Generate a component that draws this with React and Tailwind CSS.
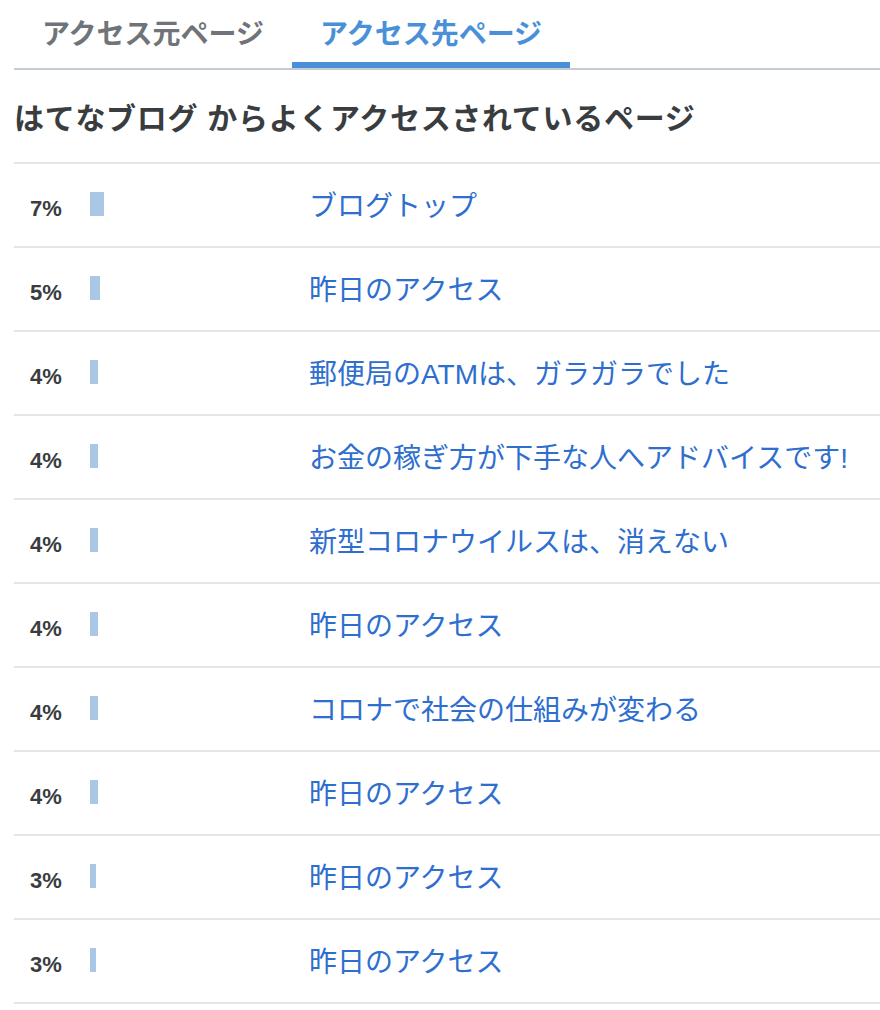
import React, { useState } from 'react';

const rows = [
  { pct: 7, title: 'ブログトップ' },
  { pct: 5, title: '昨日のアクセス' },
  { pct: 4, title: '郵便局のATMは、ガラガラでした' },
  { pct: 4, title: 'お金の稼ぎ方が下手な人へアドバイスです!' },
  { pct: 4, title: '新型コロナウイルスは、消えない' },
  { pct: 4, title: '昨日のアクセス' },
  { pct: 4, title: 'コロナで社会の仕組みが変わる' },
  { pct: 4, title: '昨日のアクセス' },
  { pct: 3, title: '昨日のアクセス' },
  { pct: 3, title: '昨日のアクセス' },
];

const tabs = ['アクセス元ページ', 'アクセス先ページ'];

const App = () => {
  const [active, setActive] = useState(1);

  return (
    <div className="w-[880px] min-h-[1010px] bg-white pl-[14px] font-['Liberation_Sans','Noto_Sans_CJK_JP',sans-serif]">
      {/* タブ */}
      <div className="flex border-b-2 border-[#c5cdd4]">
        {tabs.map((label, i) => (
          <button
            key={label}
            onClick={() => setActive(i)}
            className={`h-[68px] px-[28px] pt-[8px] flex items-center border-b-[6px] text-[28px] font-semibold leading-none ${
              active === i
                ? 'border-[#4a90d9] text-[#4a90d9]'
                : 'border-transparent text-[#707478]'
            }`}
          >
            {label}
          </button>
        ))}
      </div>

      {/* 見出し */}
      <div className="h-[92px] pt-[5px] flex items-center">
        <h2 className="text-[30px] tracking-[0.7px] font-bold leading-none text-[#3a3d40]">
          はてなブログ からよくアクセスされているページ
        </h2>
      </div>

      {/* ランキング */}
      <ul className="border-b-2 border-[#e2e5e9]">
        {rows.map((row, index) => (
          <li key={index} className="h-[84px] border-t-2 border-[#e2e5e9] flex items-center">
            <span className="w-[76px] pl-[16px] pt-[7px] text-[22px] font-bold text-[#3a3d40] leading-none">
              {row.pct}%
            </span>
            <div className="w-[219px] flex">
              <div className="h-[24px] -mt-[2px] bg-[#abc7e6]" style={{ width: row.pct * 2 }} />
            </div>
            <a href="#" className="pt-[4px] text-[28px] leading-none text-[#2e6ecf]">
              {row.title}
            </a>
          </li>
        ))}
      </ul>
    </div>
  );
};

export default App;
